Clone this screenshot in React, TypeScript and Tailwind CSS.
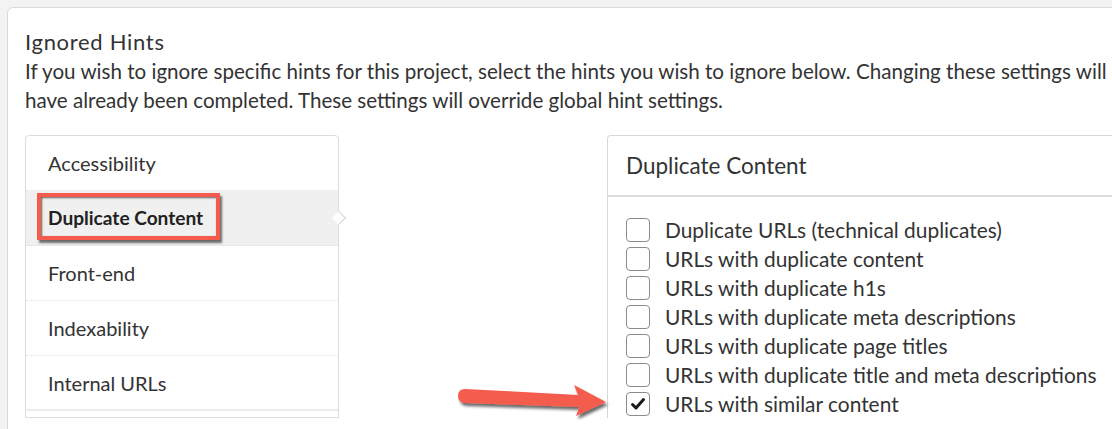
import React from "react";

const categories = [
  "Accessibility",
  "Duplicate Content",
  "Front-end",
  "Indexability",
  "Internal URLs",
];

const hints = [
  { label: "Duplicate URLs (technical duplicates)", checked: false },
  { label: "URLs with duplicate content", checked: false },
  { label: "URLs with duplicate h1s", checked: false },
  { label: "URLs with duplicate meta descriptions", checked: false },
  { label: "URLs with duplicate page titles", checked: false },
  { label: "URLs with duplicate title and meta descriptions", checked: false },
  { label: "URLs with similar content", checked: true },
];

const Checkbox = ({ checked }: { checked: boolean }) => (
  <span className="flex h-[24px] w-[24px] shrink-0 items-center justify-center rounded-[4px] border-[1.5px] border-[#8c8c8c] bg-white">
    {checked && (
      <svg width="16" height="16" viewBox="0 0 16 16">
        <path
          d="M2.5 8.5 L6 12 L13.5 3.5"
          fill="none"
          stroke="#1a1a1a"
          strokeWidth="3"
          strokeLinecap="round"
          strokeLinejoin="round"
        />
      </svg>
    )}
  </span>
);

const App = () => {
  return (
    <div
      className="relative h-[429px] w-[1112px] overflow-hidden bg-[#f3f3f3] pl-[7px] pt-[7px] text-[#333]"
      style={{ fontFamily: "Lato, 'Open Sans', sans-serif" }}
    >
      {/* Main card, runs off the right and bottom edge */}
      <div className="h-[460px] w-[1140px] rounded-tl-[6px] border border-[#dadada] bg-white pl-[17px] pt-[20px]">
        <h2 className="text-[22px] leading-[28px] tracking-[0.7px] text-[#333]">Ignored Hints</h2>
        <p className="mt-[1px] w-[1140px] whitespace-nowrap text-[20.6px] leading-[29px]">
          If you wish to ignore specific hints for this project, select the hints you wish to ignore below. Changing these settings will
          <br />
          have already been completed. These settings will override global hint settings.
        </p>

        <div className="mt-[20px] flex">
          {/* Category list */}
          <div className="w-[314px] shrink-0 rounded-t-[4px] border border-[#dcdcdc]">
            {categories.map((c, i) => {
              const active = i === 1;
              return (
                <div
                  key={c}
                  className={`relative flex h-[55px] items-center pl-[22px] ${
                    i < categories.length - 1 ? "border-b border-dotted border-[#e2e2e2]" : "border-b-2 border-[#ececec]"
                  } ${active ? "bg-[#f0f0f0] text-[19.1px] font-bold text-[#222]" : "text-[20px]"}`}
                >
                  {c}
                  {active && (
                    <span className="absolute right-[-6px] top-1/2 h-[10px] w-[10px] -translate-y-1/2 rotate-45 border-r border-t border-[#d4d4d4] bg-white" />
                  )}
                </div>
              );
            })}
          </div>

          {/* Hint panel */}
          <div className="ml-[268px] flex-1 rounded-tl-[4px] border-l border-t border-[#d8d8d8]">
            <div className="flex h-[61px] items-center border-b-2 border-[#dcdcdc] pl-[18px] text-[22.5px]">
              Duplicate Content
            </div>
            <div className="pl-[18px] pt-[18px]">
              {hints.map((h) => (
                <label key={h.label} className="flex h-[29px] items-center gap-[15px] text-[20.9px]">
                  <Checkbox checked={h.checked} />
                  <span className="whitespace-nowrap">{h.label}</span>
                </label>
              ))}
            </div>
          </div>
        </div>
      </div>

      {/* Annotation: red highlight box */}
      <div className="absolute left-[37px] top-[193px] h-[47px] w-[183px] border-[4.5px] border-[#f45b4d] shadow-[2px_3px_2px_rgba(0,0,0,0.55),inset_1px_1px_2px_rgba(0,0,0,0.6)]" />

      {/* Annotation: red arrow */}
      <svg className="absolute left-[452px] top-[380px]" width="162" height="42" viewBox="0 0 162 42">
        <defs>
          <filter id="sh" x="-10%" y="-30%" width="130%" height="180%">
            <feDropShadow dx="2" dy="3" stdDeviation="1.5" floodColor="#000" floodOpacity="0.6" />
          </filter>
        </defs>
        <path
          d="M13 9 L126 15 L122 5 L154 22 L124 36 L127 27 L13 23 Q6 22.5 6 16 Q6 9 13 9 Z"
          fill="#f45b4d"
          filter="url(#sh)"
        />
      </svg>
    </div>
  );
};

export default App;
